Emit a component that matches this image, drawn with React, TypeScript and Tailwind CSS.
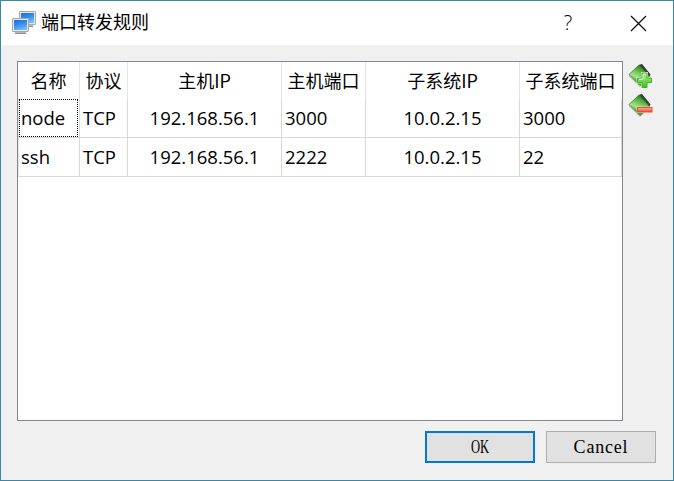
import React from 'react';

const columns = [
  { label: '名称', width: 'w-[62px]', align: 'pl-[2px]' },
  { label: '协议', width: 'w-[48px]', align: 'pl-[3px]' },
  { label: '主机IP', width: 'w-[154px]', align: 'justify-center' },
  { label: '主机端口', width: 'w-[84px]', align: 'pl-[3px]' },
  { label: '子系统IP', width: 'w-[154px]', align: 'justify-center' },
  { label: '子系统端口', width: 'w-[102px]', align: 'pl-[3px]' },
];

const rows = [
  ['node', 'TCP', '192.168.56.1', '3000', '10.0.2.15', '3000'],
  ['ssh', 'TCP', '192.168.56.1', '2222', '10.0.2.15', '22'],
];

function Monitor({ x, y }: { x: number; y: number }) {
  return (
    <g transform={`translate(${x} ${y})`}>
      <path d="M4 13h9l1.500 2.500h-12z" fill="#b4b7ba" />
      <rect x=".5" y=".5" width="16" height="13" rx=".5" fill="#e6e9ec" stroke="#a6a9ac" />
      <rect x="2" y="2" width="13" height="10" fill="url(#screen)" />
      <path d="M3 15.500h11" stroke="#8e9397" />
    </g>
  );
}

function AppIcon() {
  return (
    <svg className="h-6 w-6" viewBox="0 0 24 24">
      <defs>
        <linearGradient id="screen" x1=".2" y1="0" x2=".6" y2="1">
          <stop stopColor="#1f70e2" />
          <stop offset=".5" stopColor="#3a8ff2" />
          <stop offset="1" stopColor="#74bcfa" />
        </linearGradient>
      </defs>
      <Monitor x={7} y={0} />
      <Monitor x={0} y={7} />
    </svg>
  );
}

function RuleIcon({ kind }: { kind: 'add' | 'remove' }) {
  const card = `card-${kind}`;
  const sign = `sign-${kind}`;
  const add = kind === 'add';
  return (
    <svg className="block h-[26px] w-[26px]" viewBox="0 0 26 26">
      <defs>
        <linearGradient id={card} x1=".6" y1=".1" x2=".3" y2=".8">
          <stop stopColor="#2f8a22" />
          <stop offset=".45" stopColor="#79cd5c" />
          <stop offset=".7" stopColor="#a5e487" />
          <stop offset="1" stopColor="#3f9f2c" />
        </linearGradient>
        <linearGradient id={sign} x1="0" y1="0" x2="0" y2="1">
          <stop stopColor={add ? '#b0f589' : '#ffb39d'} />
          <stop offset="1" stopColor={add ? '#3fbf1b' : '#e94c32'} />
        </linearGradient>
      </defs>
      <path d="M1 12 12 22l10-8v1.500L12 24 1 13.500z" fill="#c3c7c1" />
      <path d="m10.500 2 3.500-1 8.500 10.500-1 2z" fill="#29332b" />
      <path d="M1 11.500 11 2l10.500 11.500L12 22.500z" fill={`url(#${card})`} stroke="#357f27" strokeWidth=".8" />
      <path d="m13.500 2.500 8 9.500" stroke="#66706a" strokeWidth=".8" strokeDasharray="1 1" />
      {add ? (
        <g>
          <path d="M14 10h5v5h4.500v4.500H19v5h-5v-5H9.500V15H14z" fill="#fff" stroke="#e8f7e2" strokeWidth="1.800" />
          <path d="M14 10h5v5h4.500v4.500H19v5h-5v-5H9.500V15H14z" fill={`url(#${sign})`} stroke="#45a530" strokeWidth=".9" />
          <path d="M15.200 11.200h2.600M15.200 11.200v5H11" fill="none" stroke="#dcfccb" strokeWidth=".9" />
        </g>
      ) : (
        <g>
          <rect x="9.500" y="14.500" width="14.500" height="4.500" fill="#fff" stroke="#fbe6e2" strokeWidth="1.600" />
          <rect x="9.500" y="14.500" width="14.500" height="4.500" fill={`url(#${sign})`} stroke="#d84d3a" strokeWidth=".9" />
        </g>
      )}
    </svg>
  );
}

export default function App() {
  return (
    <div className="flex h-[481px] w-[674px] flex-col border border-[#3b87a5] bg-[#f0f0f0] font-['Open_Sans','Noto_Sans_CJK_SC',sans-serif] text-[18.500px] leading-[24px] text-black">
      <header className="flex h-[44px] shrink-0 items-center bg-white pl-[11px]">
        <AppIcon />
        <h1 className="ml-[5px] pb-[4px] font-['Noto_Sans_CJK_SC',sans-serif] text-[18px] font-normal">端口转发规则</h1>
        <div className="ml-auto flex items-center pr-[26px]">
          <button aria-label="帮助" className="mr-[57px] w-[10px] text-center font-['Open_Sans',sans-serif] text-[20px] font-light">?</button>
          <button aria-label="关闭">
            <svg className="block h-[17px] w-[17px]" viewBox="0 0 17 17">
              <path d="m1 1 15 15M16 1 1 16" stroke="#000" strokeWidth="1.100" />
            </svg>
          </button>
        </div>
      </header>

      <main className="flex pl-4 pt-4">
        <section className="h-[360px] w-[606px] border border-[#828790] bg-white">
          <div className="flex h-[37px]">
            {columns.map((c) => (
              <div key={c.label} className={`${c.width} flex shrink-0 items-center justify-center whitespace-nowrap border-r border-[#e5e5e5] pb-px font-['Noto_Sans_CJK_SC',sans-serif] text-[18px] last:border-transparent`}>
                {c.label}
              </div>
            ))}
          </div>
          {rows.map((row, r) => (
            <div key={row[0]} className="flex h-[39px]">
              {row.map((value, i) => (
                <div
                  key={i}
                  className={`${columns[i].width} ${columns[i].align} flex shrink-0 items-center whitespace-nowrap border-b border-r border-[#d8d8d8] ${i === 0 ? 'border-l border-l-[#e5e5e5]' : ''} ${r === 0 && i === 0 ? 'pr-px !pl-0' : ''}`}
                >
                  {r === 0 && i === 0 ? (
                    <span className="flex h-full w-full items-center border border-dotted border-black pl-px">{value}</span>
                  ) : (
                    value
                  )}
                </div>
              ))}
            </div>
          ))}
        </section>
        <aside className="ml-[5px] flex flex-col gap-[4px] pt-[2px]">
          <RuleIcon kind="add" />
          <RuleIcon kind="remove" />
        </aside>
      </main>

      <footer className="flex gap-[11px] pl-[424px] pt-[10px] font-['Liberation_Serif',serif] text-[18px]">
        <button className="flex h-8 w-[110px] items-center justify-center border-2 border-[#0078d7] bg-[#e1e1e1]">
          <span className="scale-x-[.7]">OK</span>
        </button>
        <button className="flex h-8 w-[110px] items-center justify-center border border-[#adadad] bg-[#e1e1e1]">
          <span className="tracking-[.8px]">Cancel</span>
        </button>
      </footer>
    </div>
  );
}
